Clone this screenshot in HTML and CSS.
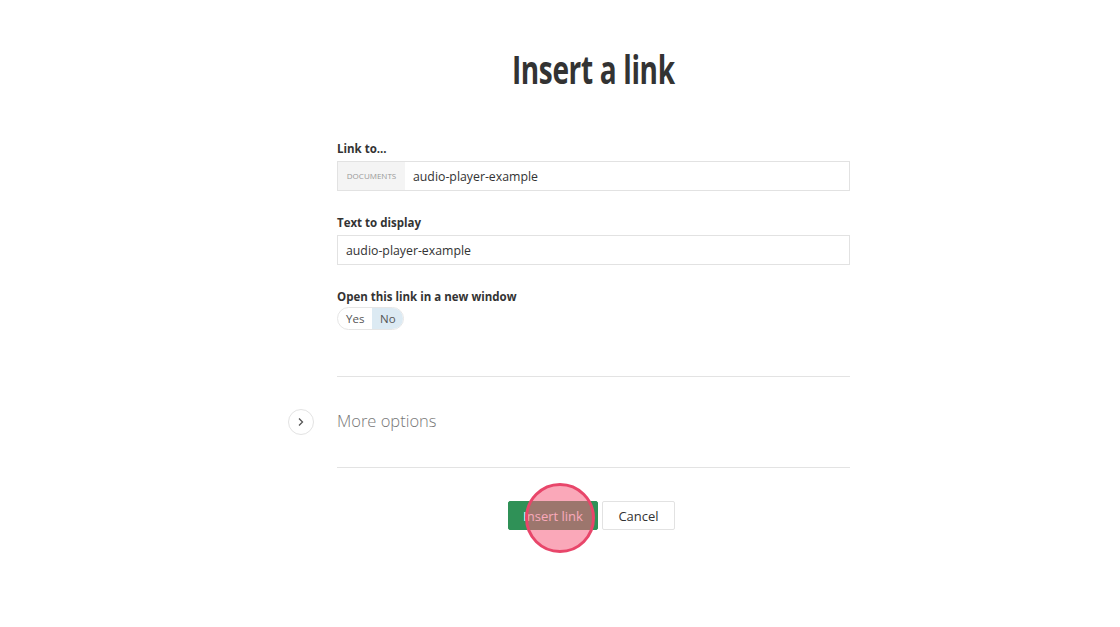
FILE: index.html
```html
<!DOCTYPE html>
<html lang="en">

<head>
    <meta charset="UTF-8">
    <meta name="viewport" content="width=device-width, initial-scale=1.0">
    <title>Insert a link</title>
    <link rel="stylesheet" href="styles.css">
</head>

<body>
    <div class="dialog">
        <div class="title-wrap">
            <h1 class="title">Insert a link</h1>
        </div>
        <div class="form">
            <div class="field">
                <label>Link to...</label>
                <div class="input-group">
                    <span class="addon">Documents</span>
                    <input type="text" value="audio-player-example">
                </div>
            </div>
            <div class="field">
                <label>Text to display</label>
                <input type="text" class="input" value="audio-player-example">
            </div>
            <div class="field">
                <label>Open this link in a new window</label>
                <div class="toggle">
                    <span class="opt">Yes</span>
                    <span class="opt active">No</span>
                </div>
            </div>
            <div class="more">
                <span class="more-icon">
                    <svg width="8" height="10" viewBox="0 0 8 10"><path d="M2 1.5 L5.5 5 L2 8.5" fill="none" stroke="#555" stroke-width="1.3"/></svg>
                </span>
                <span class="more-text">More options</span>
            </div>
            <div class="actions">
                <button class="btn btn-primary">Insert link</button>
                <button class="btn btn-cancel">Cancel</button>
                <span class="click-mark"></span>
            </div>
        </div>
    </div>
</body>

</html>
```

FILE: styles.css
```css
* {
    margin: 0;
    padding: 0;
    box-sizing: border-box;
}

body {
    font-family: "Open Sans", sans-serif;
    color: #333;
    background: #fff;
    min-height: 627px;
}

.dialog {
    width: 513px;
    margin-left: 337px;
}

.title-wrap {
    height: 139px;
    padding-top: 43px;
    text-align: center;
}

.title {
    display: inline-block;
    font-family: "Open Sans", sans-serif;
    font-weight: 700;
    font-size: 40px;
    line-height: 52px;
    color: #333;
    letter-spacing: -0.5px;
    transform: scaleX(0.7);
}

.field {
    margin-bottom: 22px;
}

.field label {
    display: block;
    font-size: 11.5px;
    font-weight: 700;
    color: #333;
    margin-bottom: 3px;
    line-height: 19px;
}

.input-group {
    display: flex;
    border: 1px solid #e2e2e2;
    height: 30px;
}

.addon {
    background: #f4f4f4;
    color: #999;
    font-size: 8px;
    text-transform: uppercase;
    width: 67px;
    line-height: 28px;
    text-align: center;
}

.input-group input,
.input {
    border: none;
    outline: none;
    font-family: "Open Sans", sans-serif;
    font-size: 12.3px;
    color: #333;
    padding: 0 8px;
    height: 28px;
    flex: 1;
}

.input {
    width: 100%;
    border: 1px solid #e2e2e2;
    height: 30px;
}

.toggle {
    display: flex;
    width: fit-content;
    border: 1px solid #e6e6e6;
    border-radius: 12px;
    overflow: hidden;
    height: 23px;
    margin-top: -2px;
}

.opt {
    font-size: 11.5px;
    color: #555;
    line-height: 21px;
    padding: 0 8px;
}

.opt:first-child {
    width: 34px;
}

.opt.active {
    background: #dceaf3;
    width: 31px;
}

.more {
    position: relative;
    border-top: 1px solid #e3e3e3;
    border-bottom: 1px solid #e3e3e3;
    height: 92px;
    margin-top: 46px;
    display: flex;
    align-items: center;
}

.more-icon {
    position: absolute;
    left: -49px;
    top: 32px;
    width: 26px;
    height: 26px;
    border: 1px solid #e3e3e3;
    border-radius: 50%;
    display: flex;
    align-items: center;
    justify-content: center;
}

.more-text {
    font-size: 16.5px;
    font-weight: 300;
    color: #777;
    margin-top: -4px;
}

.actions {
    position: relative;
    display: flex;
    justify-content: center;
    gap: 4px;
    margin-top: 33px;
    padding-right: 4px;
}

.btn {
    font-family: "Open Sans", sans-serif;
    font-size: 13px;
    color: #333;
    background: #fff;
    border: 1px solid #e2e2e2;
    border-radius: 2px;
    height: 29px;
    white-space: nowrap;
}

.btn-primary {
    background: #2f9157;
    border-color: #2f9157;
    color: #fff;
    width: 90px;
}

.btn-cancel {
    width: 73px;
}

.click-mark {
    position: absolute;
    z-index: 2;
    left: 188px;
    top: -18px;
    width: 70px;
    height: 70px;
    border-radius: 50%;
    background: rgba(246, 96, 128, 0.55);
    border: 3px solid #e8466a;
}
```
